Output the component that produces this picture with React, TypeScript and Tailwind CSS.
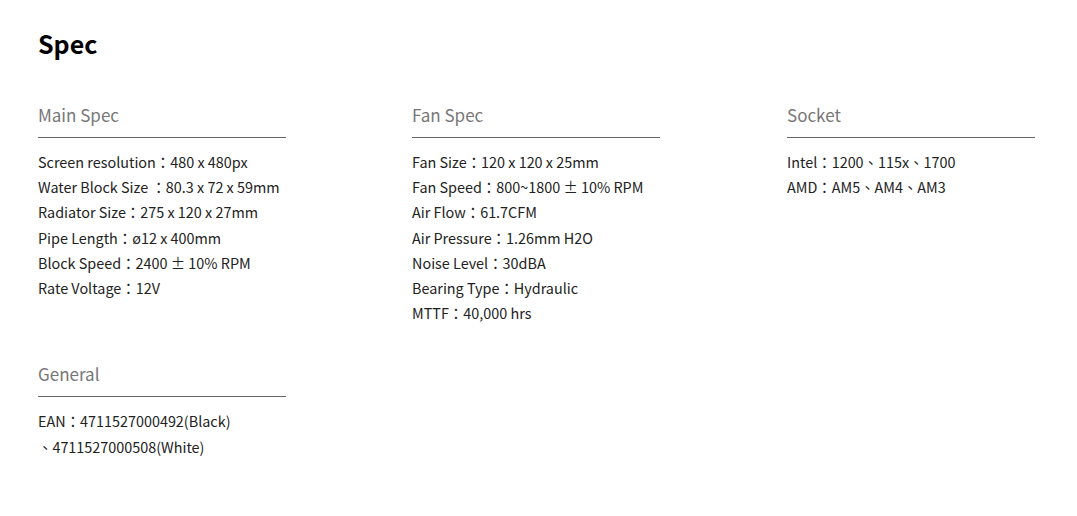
import React from "react"

type Section = { title: string; items: string[] }

const rowOne: Section[] = [
  {
    title: "Main Spec",
    items: [
      "Screen resolution：480 x 480px",
      "Water Block Size ：80.3 x 72 x 59mm",
      "Radiator Size：275 x 120 x 27mm",
      "Pipe Length：ø12 x 400mm",
      "Block Speed：2400 ± 10% RPM",
      "Rate Voltage：12V",
    ],
  },
  {
    title: "Fan Spec",
    items: [
      "Fan Size：120 x 120 x 25mm",
      "Fan Speed：800~1800 ± 10% RPM",
      "Air Flow：61.7CFM",
      "Air Pressure：1.26mm H2O",
      "Noise Level：30dBA",
      "Bearing Type：Hydraulic",
      "MTTF：40,000 hrs",
    ],
  },
  {
    title: "Socket",
    items: ["Intel：1200、115x、1700", "AMD：AM5、AM4、AM3"],
  },
]

const general: Section = {
  title: "General",
  items: ["EAN：4711527000492(Black)", "、4711527000508(White)"],
}

function SpecBlock({ title, items }: Section) {
  return (
    <div>
      {/* section heading + rule */}
      <div className="w-[248px] border-b border-[#666] pb-[8px] text-[17px] leading-[28px] text-[#777]">
        {title}
      </div>
      <ul className="mt-[11px] text-[14.4px] leading-[25.2px] text-[#222]">
        {items.map((item) => (
          <li key={item} className="whitespace-nowrap">
            {item}
          </li>
        ))}
      </ul>
    </div>
  )
}

export default function App() {
  return (
    <div
      className="min-h-[516px] w-full bg-white px-[38px] pt-[25px]"
      style={{ fontFamily: '"Noto Sans CJK TC", "Noto Sans", sans-serif' }}
    >
      <h1 className="text-[25px] font-bold leading-[36px] text-black">Spec</h1>

      <div className="mt-[40px] grid grid-cols-[374px_375px_1fr]">
        {rowOne.map((s) => (
          <SpecBlock key={s.title} {...s} />
        ))}
      </div>

      <div className="mt-[35px]">
        <SpecBlock {...general} />
      </div>
    </div>
  )
}
